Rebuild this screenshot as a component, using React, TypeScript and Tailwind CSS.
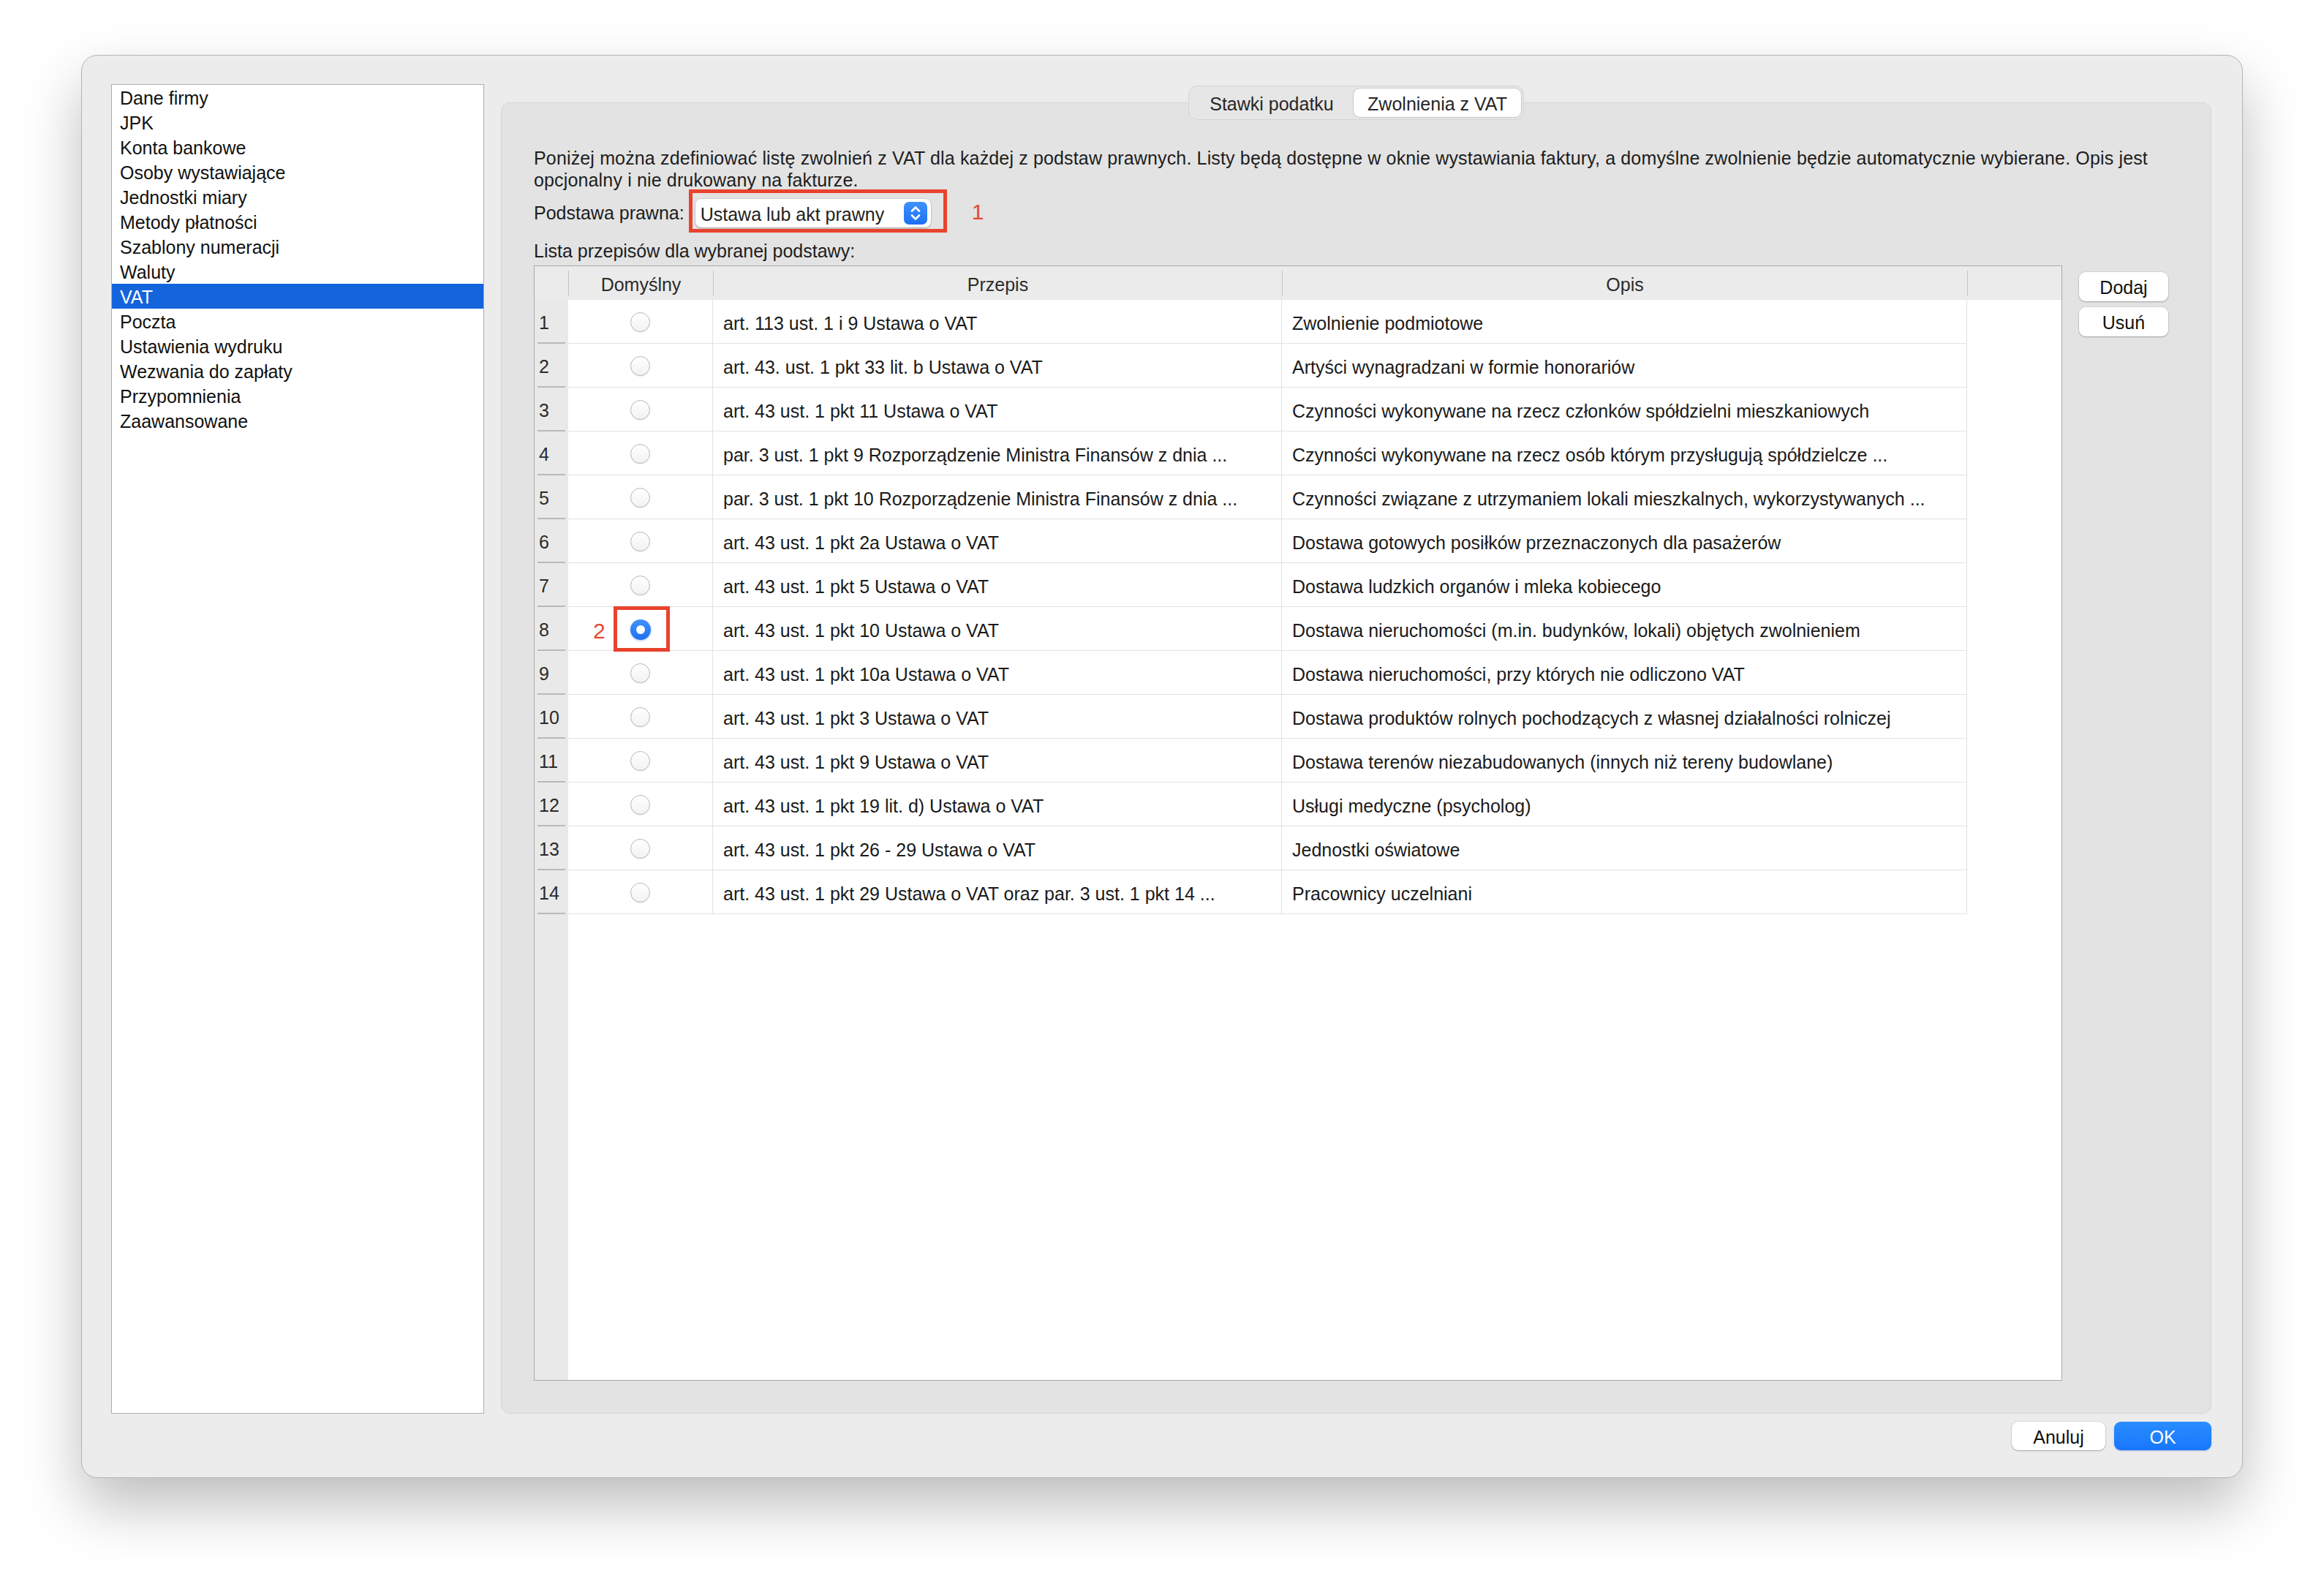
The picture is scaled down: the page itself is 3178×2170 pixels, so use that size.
import React from 'react';

const SECTIONS = [
  'Dane firmy',
  'JPK',
  'Konta bankowe',
  'Osoby wystawiające',
  'Jednostki miary',
  'Metody płatności',
  'Szablony numeracji',
  'Waluty',
  'VAT',
  'Poczta',
  'Ustawienia wydruku',
  'Wezwania do zapłaty',
  'Przypomnienia',
  'Zaawansowane',
];

const ROWS: { przepis: string; opis: string }[] = [
  { przepis: 'art. 113 ust. 1 i 9 Ustawa o VAT', opis: 'Zwolnienie podmiotowe' },
  { przepis: 'art. 43. ust. 1 pkt 33 lit. b Ustawa o VAT', opis: 'Artyści wynagradzani w formie honorariów' },
  { przepis: 'art. 43 ust. 1 pkt 11 Ustawa o VAT', opis: 'Czynności wykonywane na rzecz członków spółdzielni mieszkaniowych' },
  { przepis: 'par. 3 ust. 1 pkt 9 Rozporządzenie Ministra Finansów z dnia ...', opis: 'Czynności wykonywane na rzecz osób którym przysługują spółdzielcze ...' },
  { przepis: 'par. 3 ust. 1 pkt 10 Rozporządzenie Ministra Finansów z dnia ...', opis: 'Czynności związane z utrzymaniem lokali mieszkalnych, wykorzystywanych ...' },
  { przepis: 'art. 43 ust. 1 pkt 2a Ustawa o VAT', opis: 'Dostawa gotowych posiłków przeznaczonych dla pasażerów' },
  { przepis: 'art. 43 ust. 1 pkt 5 Ustawa o VAT', opis: 'Dostawa ludzkich organów i mleka kobiecego' },
  { przepis: 'art. 43 ust. 1 pkt 10 Ustawa o VAT', opis: 'Dostawa nieruchomości (m.in. budynków, lokali) objętych zwolnieniem' },
  { przepis: 'art. 43 ust. 1 pkt 10a Ustawa o VAT', opis: 'Dostawa nieruchomości, przy których nie odliczono VAT' },
  { przepis: 'art. 43 ust. 1 pkt 3 Ustawa o VAT', opis: 'Dostawa produktów rolnych pochodzących z własnej działalności rolniczej' },
  { przepis: 'art. 43 ust. 1 pkt 9 Ustawa o VAT', opis: 'Dostawa terenów niezabudowanych (innych niż tereny budowlane)' },
  { przepis: 'art. 43 ust. 1 pkt 19 lit. d) Ustawa o VAT', opis: 'Usługi medyczne (psycholog)' },
  { przepis: 'art. 43 ust. 1 pkt 26 - 29 Ustawa o VAT', opis: 'Jednostki oświatowe' },
  { przepis: 'art. 43 ust. 1 pkt 29 Ustawa o VAT oraz par. 3 ust. 1 pkt 14 ...', opis: 'Pracownicy uczelniani' },
];

const DEFAULT_ROW = 7;

const Radio: React.FC<{ checked: boolean }> = ({ checked }) =>
  checked ? (
    <div className="w-[28px] h-[28px] rounded-full bg-gradient-to-b from-[#4191fb] to-[#1f70f2] shadow-[0_1px_3px_rgba(0,80,200,0.35)] flex items-center justify-center">
      <div className="w-[12px] h-[12px] rounded-full bg-white" />
    </div>
  ) : (
    <div className="w-[27px] h-[27px] rounded-full bg-gradient-to-b from-white to-[#f2f2f2] border border-[#b6b6b6] shadow-[0_1px_1px_rgba(0,0,0,0.08)]" />
  );

const StepperIcon = () => (
  <svg width="32" height="31" viewBox="0 0 32 31" fill="none">
    <path d="M11 12.5 L16 7.5 L21 12.5" stroke="white" strokeWidth="2.6" strokeLinecap="round" strokeLinejoin="round" />
    <path d="M11 18.5 L16 23.5 L21 18.5" stroke="white" strokeWidth="2.6" strokeLinecap="round" strokeLinejoin="round" />
  </svg>
);

export default function App() {
  return (
    <div className="w-[3178px] h-[2170px] bg-white pt-[75px] pl-[111px] font-['Liberation_Sans',Arial,sans-serif] text-[25px] text-[#1c1c1c] leading-none">
      {/* Window */}
      <div className="w-[2956px] h-[1946px] rounded-[22px] bg-[#ececec] border border-[#b4b4b4] shadow-[0_38px_80px_rgba(0,0,0,0.26)] flex flex-col pt-[39px] pl-[40px] pr-[42px] pb-[36px]">
        <div className="flex gap-[23px] h-[1818px]">
          {/* Sidebar */}
          <div className="w-[510px] h-full bg-white border border-[#adadad] flex flex-col">
            {SECTIONS.map((s) => (
              <div
                key={s}
                className={
                  s === 'VAT'
                    ? 'h-[34px] flex items-center pl-[11px] pt-[3px] bg-[#1464dc] text-white'
                    : 'h-[34px] flex items-center pl-[11px] pt-[3px] text-[#111]'
                }
              >
                {s}
              </div>
            ))}
          </div>

          {/* Right column */}
          <div className="flex-1 flex flex-col pt-[2px]">
            <div className="relative z-10 flex justify-center">
              <div className="h-[47px] w-[459px] rounded-[12px] bg-[#e6e6e6] border border-[#d4d4d4] flex items-center p-[2px]">
                <div className="w-[222px] h-full flex items-center justify-center pt-[3px] text-[#262626]">Stawki podatku</div>
                <div className="flex-1 h-full rounded-[10px] bg-white border border-[#c8c8c8] flex items-center justify-center pt-[3px] text-[#262626]">
                  Zwolnienia z VAT
                </div>
              </div>
            </div>

            {/* Tab panel */}
            <div className="-mt-[24px] flex-1 rounded-[12px] bg-[#e3e3e3] border border-[#d5d5d5] pt-[60px] pl-[44px] pr-[57px] pb-[44px] flex flex-col">
              <div className="leading-[30px] text-[#1d1d1d] tracking-[0.15px]">
                <div className="whitespace-nowrap">
                  Poniżej można zdefiniować listę zwolnień z VAT dla każdej z podstaw prawnych. Listy będą dostępne w oknie wystawiania faktury, a domyślne zwolnienie będzie automatycznie wybierane. Opis jest
                </div>
                <div className="whitespace-nowrap">opcjonalny i nie drukowany na fakturze.</div>
              </div>

              {/* Podstawa prawna */}
              <div className="flex items-center h-[59px] -mt-[2px]">
                <span className="pt-[6px] text-[#1d1d1d]">Podstawa prawna:</span>
                <div className="ml-[6px] h-[59px] border-[5px] border-[#e8432d] pl-[4px] pr-[17px] pt-[8px] pb-[2px]">
                  <div className="w-[322px] h-[39px] rounded-[8px] bg-white shadow-[0_1px_2px_rgba(0,0,0,0.3),0_0_0_1px_rgba(0,0,0,0.06)] flex items-center pl-[7px] pr-[5px]">
                    <span className="flex-1 pt-[3px] text-[#222]">Ustawa lub akt prawny</span>
                    <div className="w-[32px] h-[31px] rounded-[7px] bg-gradient-to-b from-[#3f92fc] to-[#1e6ff3] flex items-center justify-center">
                      <StepperIcon />
                    </div>
                  </div>
                </div>
                <span className="ml-[34px] pt-[2px] text-[30px] text-[#e64a2e]">1</span>
              </div>

              <div className="mt-[9px] h-[30px] flex items-center pt-[3px] text-[#1d1d1d]">Lista przepisów dla wybranej podstawy:</div>

              {/* Table + buttons */}
              <div className="mt-[6px] flex-1 flex gap-[23px]">
                <div className="w-[2090px] h-full border border-[#a9a9a9] bg-white flex flex-col">
                  {/* Header */}
                  <div className="h-[46px] bg-[#ebebeb] flex items-center text-[#2b2b2b]">
                    <div className="w-[46px]" />
                    <div className="w-px h-[34px] bg-[#c3c3c3]" />
                    <div className="w-[197px] pt-[5px] text-center">Domyślny</div>
                    <div className="w-px h-[34px] bg-[#c3c3c3]" />
                    <div className="w-[777px] pt-[5px] text-center">Przepis</div>
                    <div className="w-px h-[34px] bg-[#c3c3c3]" />
                    <div className="w-[936px] pt-[5px] text-center">Opis</div>
                    <div className="w-px h-[34px] bg-[#c3c3c3]" />
                  </div>

                  {/* Rows */}
                  {ROWS.map((r, i) => (
                    <div key={i} className="h-[60px] flex">
                      <div className="w-[46px] bg-[#e9e9e9] flex flex-col">
                        <div className="flex-1 flex items-center pl-[6px] pt-[5px] text-[#2a2a2a]">{i + 1}</div>
                        <div className="h-[2px] mx-[4px] bg-[#b9b9b9]" />
                      </div>
                      <div className="flex border-b border-[#e2e2e2]">
                        <div className="relative w-[198px] border-r border-[#e2e2e2] flex items-center justify-center pt-[2px]">
                          <Radio checked={i === DEFAULT_ROW} />
                          {i === DEFAULT_ROW && (
                            <>
                              <div className="absolute left-[62px] -top-[1px] w-[77px] h-[62px] border-[5px] border-[#e8432d]" />
                              <span className="absolute left-[34px] top-[18px] text-[30px] text-[#e64a2e]">2</span>
                            </>
                          )}
                        </div>
                        <div className="w-[778px] border-r border-[#e2e2e2] flex items-center pl-[14px] pt-[5px] whitespace-nowrap overflow-hidden text-[#1a1a1a]">
                          {r.przepis}
                        </div>
                        <div className="w-[937px] border-r border-[#e2e2e2] flex items-center pl-[14px] pt-[5px] whitespace-nowrap overflow-hidden text-[#1a1a1a]">
                          {r.opis}
                        </div>
                      </div>
                      <div className="flex-1" />
                    </div>
                  ))}
                  <div className="flex-1 flex">
                    <div className="w-[46px] bg-[#e9e9e9]" />
                    <div className="flex-1" />
                  </div>
                </div>

                <div className="flex flex-col gap-[8px] pt-[9px]">
                  <button className="w-[122px] h-[40px] rounded-[9px] bg-white pt-[3px] shadow-[0_1px_2px_rgba(0,0,0,0.25),0_0_0_1px_rgba(0,0,0,0.05)] text-[#111]">
                    Dodaj
                  </button>
                  <button className="w-[122px] h-[40px] rounded-[9px] bg-white pt-[3px] shadow-[0_1px_2px_rgba(0,0,0,0.25),0_0_0_1px_rgba(0,0,0,0.05)] text-[#111]">
                    Usuń
                  </button>
                </div>
              </div>
            </div>
          </div>
        </div>

        {/* Dialog buttons */}
        <div className="mt-[11px] flex justify-end gap-[12px]">
          <button className="w-[128px] h-[39px] rounded-[9px] bg-white pt-[3px] shadow-[0_1px_2px_rgba(0,0,0,0.28),0_0_0_1px_rgba(0,0,0,0.05)] text-[#111]">
            Anuluj
          </button>
          <button className="w-[133px] h-[39px] rounded-[9px] bg-gradient-to-b from-[#2a8dff] to-[#1876fc] pt-[3px] shadow-[0_1px_2px_rgba(0,60,180,0.3)] text-white">
            OK
          </button>
        </div>
      </div>
    </div>
  );
}
